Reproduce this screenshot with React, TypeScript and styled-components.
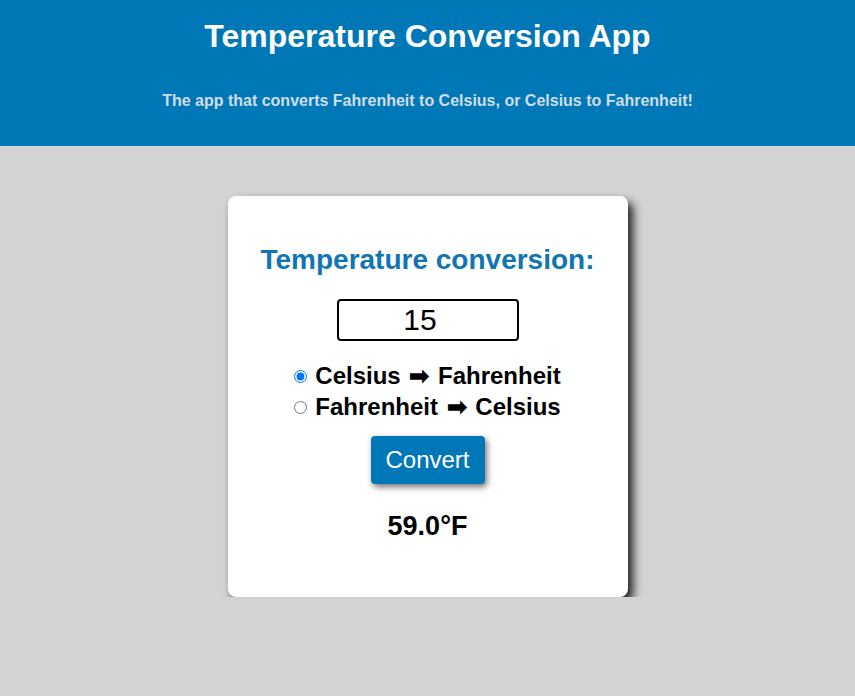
import { useState } from "react";
import styled, { createGlobalStyle } from "styled-components";

const GlobalStyle = createGlobalStyle`
  html, body {
    margin: 0;
    padding: 0;
    background: #d3d3d3;
    font-family: "Liberation Sans", Arial, sans-serif;
  }
`;

const Header = styled.header`
  background: #0077b6;
  height: 146px;
  box-sizing: border-box;
  padding-top: 18px;
  display: flex;
  flex-direction: column;
  align-items: center;
`;

const Title = styled.h1`
  margin: 0;
  font-size: 32px;
  line-height: 37px;
  font-weight: 700;
  color: #ffffff;
`;

const Subtitle = styled.p`
  margin: 37px 0 0;
  font-size: 16px;
  line-height: 18px;
  font-weight: 700;
  color: #cfdde8;
`;

const Main = styled.main`
  display: flex;
  justify-content: center;
  padding-top: 50px;
`;

const Card = styled.section`
  width: 400px;
  height: 401px;
  box-sizing: border-box;
  background: #ffffff;
  border-radius: 8px;
  box-shadow: 5px 6px 10px rgba(0, 0, 0, 0.85);
  padding-top: 48px;
  display: flex;
  flex-direction: column;
  align-items: center;
`;

const CardTitle = styled.h2`
  margin: 0;
  font-size: 28px;
  line-height: 32px;
  font-weight: 700;
  color: #0f75b3;
`;

const NumberInput = styled.input`
  margin-top: 23px;
  width: 182px;
  height: 42px;
  box-sizing: border-box;
  border: 2px solid #000;
  border-radius: 4px;
  font-family: "Liberation Sans", Arial, sans-serif;
  font-size: 30px;
  text-align: center;
  color: #000;
  padding: 0 2px;
  outline: none;
`;

const Options = styled.div`
  margin-top: 19px;
  display: flex;
  flex-direction: column;
`;

const Option = styled.label`
  display: flex;
  align-items: center;
  height: 31px;
  font-size: 24px;
  font-weight: 700;
  color: #000;
  cursor: pointer;
`;

const OptionText = styled.span`
  white-space: nowrap;
`;

const Arrow = styled.span`
  margin: 0 2px;
`;

const Radio = styled.input`
  width: 13px;
  height: 13px;
  margin: 1px 8px 0 0;
`;

const ConvertButton = styled.button`
  margin-top: 14px;
  width: 114px;
  height: 48px;
  border: none;
  border-radius: 4px;
  background: #0077b6;
  color: #ffffff;
  font-family: "Liberation Sans", Arial, sans-serif;
  font-size: 24px;
  box-shadow: 2px 3px 6px rgba(0, 0, 0, 0.55);
  cursor: pointer;
`;

const Result = styled.div`
  margin-top: 27px;
  font-size: 27px;
  line-height: 31px;
  font-weight: 700;
  color: #000;
`;

export default function App() {
  const [value, setValue] = useState("15");
  const [mode, setMode] = useState<"c2f" | "f2c">("c2f");
  const [result, setResult] = useState("59.0°F");

  const convert = () => {
    const n = parseFloat(value);
    if (Number.isNaN(n)) return;
    setResult(
      mode === "c2f"
        ? `${((n * 9) / 5 + 32).toFixed(1)}°F`
        : `${(((n - 32) * 5) / 9).toFixed(1)}°C`
    );
  };

  return (
    <>
      <GlobalStyle />
      <Header>
        <Title>Temperature Conversion App</Title>
        <Subtitle>
          The app that converts Fahrenheit to Celsius, or Celsius to Fahrenheit!
        </Subtitle>
      </Header>
      <Main>
        <Card>
          <CardTitle>Temperature conversion:</CardTitle>
          <NumberInput
            type="number"
            value={value}
            onChange={(e) => setValue(e.target.value)}
          />
          <Options>
            <Option>
              <Radio
                type="radio"
                name="mode"
                checked={mode === "c2f"}
                onChange={() => setMode("c2f")}
              />
              <OptionText>
                Celsius <Arrow>➡</Arrow> Fahrenheit
              </OptionText>
            </Option>
            <Option>
              <Radio
                type="radio"
                name="mode"
                checked={mode === "f2c"}
                onChange={() => setMode("f2c")}
              />
              <OptionText>
                Fahrenheit <Arrow>➡</Arrow> Celsius
              </OptionText>
            </Option>
          </Options>
          <ConvertButton onClick={convert}>Convert</ConvertButton>
          <Result>{result}</Result>
        </Card>
      </Main>
    </>
  );
}
